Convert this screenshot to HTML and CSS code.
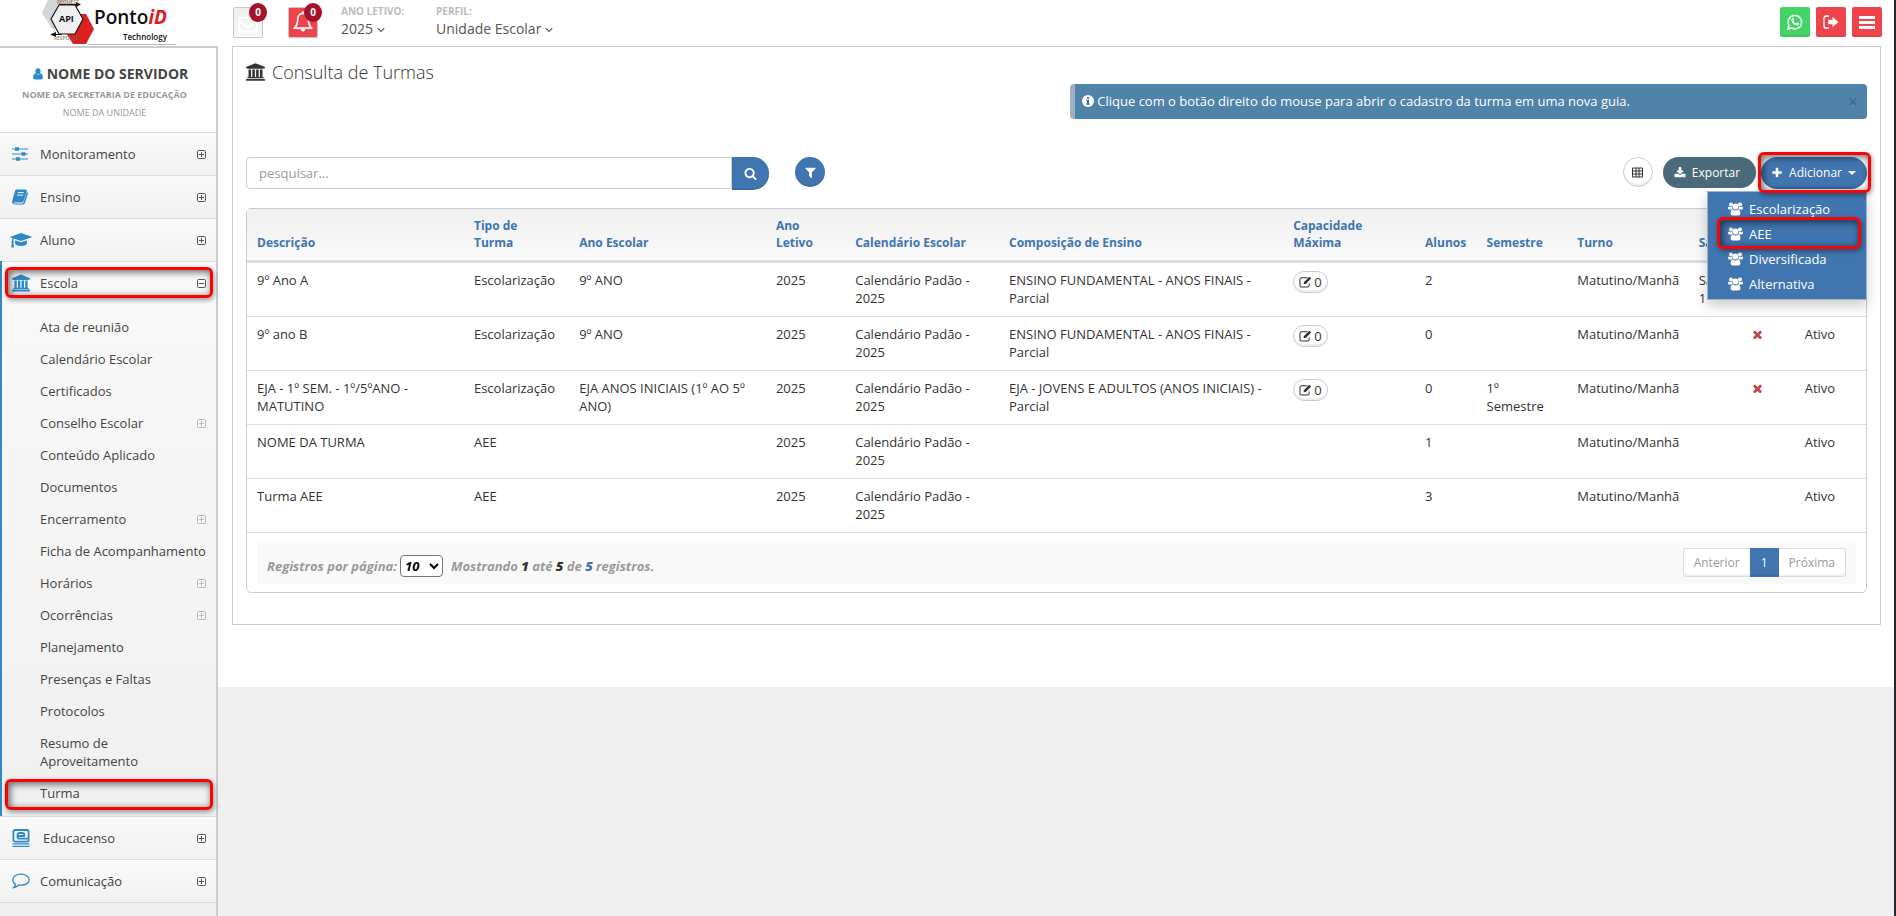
FILE: index.html
```html
<!DOCTYPE html>
<html lang="pt-BR">
<head>
<meta charset="utf-8">
<title>Consulta de Turmas</title>
<link rel="stylesheet" href="styles.css">
</head>
<body>
<svg class="sprite" aria-hidden="true">
  <symbol id="i-plus" viewBox="0 0 1792 1792"><path d="M1600 736v192q0 40-28 68t-68 28h-416v416q0 40-28 68t-68 28h-192q-40 0-68-28t-28-68v-416h-416q-40 0-68-28t-28-68v-192q0-40 28-68t68-28h416v-416q0-40 28-68t68-28h192q40 0 68 28t28 68v416h416q40 0 68 28t28 68z"/></symbol>
  <symbol id="i-search" viewBox="0 0 1792 1792"><path d="M1216 832q0-185-131.500-316.500t-316.500-131.500-316.500 131.500-131.500 316.500 131.500 316.500 316.500 131.500 316.500-131.500 131.500-316.500zm512 832q0 52-38 90t-90 38q-54 0-90-38l-343-342q-179 124-399 124-143 0-273.500-55.500t-225-150-150-225-55.500-273.500 55.500-273.500 150-225 225-150 273.500-55.500 273.500 55.500 225 150 150 225 55.500 273.500q0 220-124 399l343 343q37 37 37 90z"/></symbol>
  <symbol id="i-filter" viewBox="0 0 1792 1792"><path d="M1595 295q17 41-14 70l-493 493v742q0 42-39 59-13 5-25 5-27 0-45-19l-256-256q-19-19-19-45v-486l-493-493q-31-29-14-70 17-39 59-39h1280q42 0 59 39z"/></symbol>
  <symbol id="i-times" viewBox="0 0 1792 1792"><path d="M1490 1322q0 40-28 68l-136 136q-28 28-68 28t-68-28l-294-294-294 294q-28 28-68 28t-68-28l-136-136q-28-28-28-68t28-68l294-294-294-294q-28-28-28-68t28-68l136-136q28-28 68-28t68 28l294 294 294-294q28-28 68-28t68 28l136 136q28 28 28 68t-28 68l-294 294 294 294q28 28 28 68z"/></symbol>
  <symbol id="i-download" viewBox="0 0 1792 1792"><path d="M1344 1344q0-26-19-45t-45-19-45 19-19 45 19 45 45 19 45-19 19-45zm256 0q0-26-19-45t-45-19-45 19-19 45 19 45 45 19 45-19 19-45zm128-224v320q0 40-28 68t-68 28h-1472q-40 0-68-28t-28-68v-320q0-40 28-68t68-28h465l135 136q58 56 136 56t136-56l136-136h464q40 0 68 28t28 68zm-325-569q17 41-14 70l-448 448q-18 19-45 19t-45-19l-448-448q-31-29-14-70 17-39 59-39h256v-448q0-26 19-45t45-19h256q26 0 45 19t19 45v448h256q42 0 59 39z"/></symbol>
  <symbol id="i-school" viewBox="0 0 1920 1792"><path d="M960 0l960 384v128h-128q0 26-20.500 45t-48.500 19h-1526q-28 0-48.500-19t-20.500-45h-128v-128zm-704 640h256v768h128v-768h256v768h128v-768h256v768h128v-768h256v768h59q28 0 48.500 19t20.500 45v64h-1664v-64q0-26 20.500-45t48.500-19h59v-768zm1595 960q28 0 48.500 19t20.500 45v128h-1920v-128q0-26 20.500-45t48.500-19h1782z"/></symbol>
  <symbol id="i-user" viewBox="0 0 14 16"><ellipse cx="7" cy="4" rx="3.600" ry="4"/><path d="M3.500 7c-2.300.8-3.300 3-3.300 6 0 1.700 1 2.700 2.500 2.700h8.600c1.500 0 2.500-1 2.500-2.700 0-3-1-5.200-3.300-6-2 2.200-5 2.200-7 0z"/></symbol>
  <symbol id="i-sliders" viewBox="0 0 16 14"><path d="M0 1.500h16v1H0zM0 6.500h16v1H0zM0 11.500h16v1H0zM3 .3h4v3.400H3zM9.500 5.300h4v3.400h-4zM4 10.300h4v3.400H4z"/></symbol>
  <symbol id="i-book" viewBox="0 0 16 16"><path d="M4.500.5h9c1 0 1.500.8 1.200 1.700L11.600 12c-.3.900-1.200 1.500-2.100 1.500H2.300c-.7 0-.9.600-.5 1h8.400c.5 0 1-.3 1.200-.8L14.900 3.100c.9.300 1.200 1 .9 1.900l-2.900 9c-.3.900-1.200 1.500-2.100 1.500H2.500C.6 15.500-.4 13.600.3 11.800L3 2C3.200 1.100 3.700.5 4.500.5z"/><path class="cut" d="M5.700 3.600h6M5 6.100h6"/></symbol>
  <symbol id="i-cap" viewBox="0 0 22 16"><path d="M11 1l10.700 3.700c.3.100.3.500 0 .6L11 9 4.300 6.700C3.600 7.400 3.400 8 3.300 9c.7.500.7 1.400.1 1.900l.6 4.600H1.200l.6-4.600c-.6-.5-.6-1.400.1-1.900.1-1.100.3-2 .8-2.800L.3 5.300c-.3-.1-.3-.5 0-.6z"/><path d="M5.200 8.200L11 10.200l5.800-2 .2 3.600c-1 1.400-3.300 2.200-6 2.200s-5-.8-6-2.200z"/></symbol>
  <symbol id="i-educa" viewBox="0 0 18 18"><g fill="none" stroke="currentColor" stroke-width="1.800"><rect x="1.400" y="1" width="15.200" height="11.600" rx="1.600"/><path d="M5.500 7h6.700V5.800c0-1.300-.8-1.800-1.900-1.800H7.600C6.200 4 5.500 4.600 5.500 5.800v2c0 1.300.8 1.900 2.100 1.900h8.500"/><path d="M.5 14.800h17M.5 17.300h17" stroke-width="1.200"/></g></symbol>
  <symbol id="i-comment" viewBox="0 0 18 16"><path fill="none" stroke="currentColor" stroke-width="1.300" d="M9 1.200c4.600 0 8.200 2.400 8.200 5.500S13.600 12.200 9 12.200c-.8 0-1.500-.1-2.200-.2-1.300 1.300-3 2.200-5 2.500.9-.9 1.500-2 1.700-3.300C1.800 10.200.8 8.600.8 6.700.8 3.600 4.400 1.200 9 1.200z"/></symbol>
  <symbol id="i-expand" viewBox="0 0 9 9"><path fill="none" stroke="currentColor" d="M1.500.5h6a1 1 0 0 1 1 1v6a1 1 0 0 1-1 1h-6a1 1 0 0 1-1-1v-6a1 1 0 0 1 1-1zM2 4.500h5M4.500 2v5"/></symbol>
  <symbol id="i-collapse" viewBox="0 0 9 9"><path fill="none" stroke="currentColor" d="M1.500.5h6a1 1 0 0 1 1 1v6a1 1 0 0 1-1 1h-6a1 1 0 0 1-1-1v-6a1 1 0 0 1 1-1zM2 4.500h5"/></symbol>
  <symbol id="i-mail" viewBox="0 0 20 16"><path fill="none" stroke="currentColor" stroke-width="1.600" stroke-linejoin="round" d="M1.500 1h17v14h-17zM1.500 4.500l7 5.500c1 .7 2 .7 3 0l7-5.500"/></symbol>
  <symbol id="i-bell" viewBox="0 0 18 20"><path fill="none" stroke="currentColor" stroke-width="1.500" stroke-linejoin="round" d="M9 2.200c3 0 4.800 2.200 4.800 5 0 4.200 1 6.400 3.200 8.300H1c2.200-1.900 3.200-4.100 3.200-8.300 0-2.800 1.800-5 4.800-5z"/><path d="M8 .5h2v2H8zM6.700 16h4.600c0 1.600-1 2.600-2.300 2.600S6.700 17.600 6.700 16z"/></symbol>
  <symbol id="i-chevron" viewBox="0 0 8 6"><path fill="none" stroke="currentColor" stroke-width="1.200" d="M.7 1.200L4 4.500l3.300-3.300"/></symbol>
  <symbol id="i-whatsapp" viewBox="0 0 16 16"><path fill="none" stroke="currentColor" stroke-width="1.500" d="M1 15l1-3.700A6.700 6.700 0 1 1 4.700 14z"/><path d="M5.200 4.200c.4-.4 1-.4 1.200.1l.6 1.400c.1.300-.6.900-.6 1.200.5 1.100 1.500 2 2.700 2.500.3.100.9-.9 1.200-.8l1.500.8c.5.300-.1 1.300-.5 1.600-.8.600-1.800.5-2.800.1-1.700-.7-3-2-3.800-3.700-.5-1.100-.4-2.300.5-3.200z"/></symbol>
  <symbol id="i-exit" viewBox="0 0 16 14"><path fill="none" stroke="currentColor" stroke-width="1.400" d="M6 1H3.200A2.200 2.200 0 0 0 1 3.200v7.600A2.200 2.200 0 0 0 3.200 13H6"/><path d="M9.600 1.700L15.400 7l-5.800 5.300V9.200H5.200V4.800h4.400z"/></symbol>
  <symbol id="i-bars" viewBox="0 0 16 13"><path d="M0 0h16v3H0zM0 5h16v3H0zM0 10h16v3H0z"/></symbol>
  <symbol id="i-info" viewBox="0 0 12 12"><circle cx="6" cy="6" r="6"/><path fill="#3d78a8" d="M5 2h2v1.700H5zM4.300 4.800H7v3.700h.8v1.300H4.200V8.500H5V6h-.7z"/></symbol>
  <symbol id="i-table" viewBox="0 0 11 11"><path fill="none" stroke="currentColor" d="M.5 1h10v9H.5zM0 4h11M0 7h11M4 1v9M7 1v9"/></symbol>
  <symbol id="i-edit" viewBox="0 0 14 13"><path fill="none" stroke="currentColor" stroke-width="1.100" d="M9.200 2H2.700A1.700 1.700 0 0 0 1 3.700v6.600A1.700 1.700 0 0 0 2.700 12h6.600a1.700 1.700 0 0 0 1.700-1.700V8.200"/><path d="M11.200.8l2 2-6 6H5.100V6.700z"/></symbol>
  <symbol id="i-users" viewBox="0 0 15 14"><circle cx="3" cy="2.400" r="2"/><circle cx="12" cy="2.400" r="2"/><circle cx="7.500" cy="4.600" r="3"/><path d="M.9 4.600c.9.700 2 .7 3 .2 0 1.100.3 1.900.9 2.600H1.700C.6 7.400 0 6.900.1 5.900.1 5.300.4 4.700.9 4.600zM14.100 4.600c-.9.700-2 .7-3 .2 0 1.100-.3 1.900-.9 2.600h3.100c1.100 0 1.700-.5 1.600-1.500 0-.6-.3-1.200-.8-1.300zM4.800 7.600c1.600 1.200 3.800 1.200 5.400 0 1.500.3 2.200 1.900 2.200 4 0 1.200-.8 2-2 2H4.600c-1.200 0-2-.8-2-2 0-2.100.7-3.700 2.200-4z"/></symbol>
</svg>

<div class="app">
  <header class="topbar">
    <a class="logo" href="#" aria-label="PontoiD Technology">
      <svg class="logo-art" viewBox="0 0 134 46" aria-hidden="true">
        <path fill="#d5d6d8" d="M8-5h20l6 18-14 16H10L0 13z"/>
        <path fill="#db2020" d="M33 14h11l8 15-8 15H31L23 31z"/>
        <path fill="#f0f0f1" stroke="#161616" stroke-width="1.200" d="M17 5h16l8 14-8 15H17L9 19z"/>
        <path stroke="#161616" stroke-width="1.200" d="M17 4.500h18M12 34.500h8"/>
        <path fill="#161616" d="M34 2l5 2.500L34 7zM14 32l-6 2.500 6 2.500z"/>
        <text class="logo-tiny" x="15" y="4">REQUEST</text>
        <text class="logo-api" x="17" y="22">API</text>
        <text class="logo-tiny" x="12" y="40">RESPONSE</text>
        <path stroke="#bbb" d="M46 44.500h88"/>
      </svg>
      <span class="logo-text"><span class="logo-name">Ponto<em>iD</em></span><span class="logo-sub">Technology</span></span>
    </a>
    <div class="top-tools">
      <button class="notify mail" type="button" aria-label="Mensagens"><svg class="i-22"><use href="#i-mail"/></svg><span class="count">0</span></button>
      <button class="notify bell" type="button" aria-label="Alertas"><svg class="i-22"><use href="#i-bell"/></svg><span class="count">0</span></button>
      <div class="context"><span class="context-label">ANO LETIVO:</span><button type="button">2025 <svg class="chev"><use href="#i-chevron"/></svg></button></div>
      <div class="context"><span class="context-label">PERFIL:</span><button type="button">Unidade Escolar <svg class="chev"><use href="#i-chevron"/></svg></button></div>
      <div class="top-actions">
        <button class="sq green" type="button" aria-label="WhatsApp"><svg class="i-16"><use href="#i-whatsapp"/></svg></button>
        <button class="sq red" type="button" aria-label="Sair"><svg class="i-16"><use href="#i-exit"/></svg></button>
        <button class="sq red" type="button" aria-label="Menu"><svg class="i-bars"><use href="#i-bars"/></svg></button>
      </div>
    </div>
  </header>

  <div class="body">
    <nav class="sidebar">
      <div class="who">
        <p class="who-name"><svg class="who-icon"><use href="#i-user"/></svg>NOME DO SERVIDOR</p>
        <p class="who-org">NOME DA SECRETARIA DE EDUCAÇÃO</p>
        <p class="who-unit">NOME DA UNIDADE</p>
      </div>
      <ul class="menu">
        <li><a class="item" href="#"><svg class="ico"><use href="#i-sliders"/></svg>Monitoramento<svg class="exp"><use href="#i-expand"/></svg></a></li>
        <li><a class="item" href="#"><svg class="ico"><use href="#i-book"/></svg>Ensino<svg class="exp"><use href="#i-expand"/></svg></a></li>
        <li><a class="item" href="#"><svg class="ico wide"><use href="#i-cap"/></svg>Aluno<svg class="exp"><use href="#i-expand"/></svg></a></li>
        <li class="open"><a class="item marked" href="#"><svg class="ico big"><use href="#i-school"/></svg>Escola<svg class="exp"><use href="#i-collapse"/></svg></a>
          <ul class="submenu">
            <li><a href="#">Ata de reunião</a></li>
            <li><a href="#">Calendário Escolar</a></li>
            <li><a href="#">Certificados</a></li>
            <li><a href="#">Conselho Escolar<svg class="exp"><use href="#i-expand"/></svg></a></li>
            <li><a href="#">Conteúdo Aplicado</a></li>
            <li><a href="#">Documentos</a></li>
            <li><a href="#">Encerramento<svg class="exp"><use href="#i-expand"/></svg></a></li>
            <li><a href="#">Ficha de Acompanhamento</a></li>
            <li><a href="#">Horários<svg class="exp"><use href="#i-expand"/></svg></a></li>
            <li><a href="#">Ocorrências<svg class="exp"><use href="#i-expand"/></svg></a></li>
            <li><a href="#">Planejamento</a></li>
            <li><a href="#">Presenças e Faltas</a></li>
            <li><a href="#">Protocolos</a></li>
            <li><a href="#">Resumo de<br>Aproveitamento</a></li>
            <li><a class="marked" href="#">Turma</a></li>
          </ul>
        </li>
        <li><a class="item" href="#"><svg class="ico big educa"><use href="#i-educa"/></svg>Educacenso<svg class="exp"><use href="#i-expand"/></svg></a></li>
        <li><a class="item" href="#"><svg class="ico big"><use href="#i-comment"/></svg>Comunicação<svg class="exp"><use href="#i-expand"/></svg></a></li>
      </ul>
    </nav>

    <main class="content">
      <div class="sheet">
        <section class="panel">
          <h1><svg class="title-icon"><use href="#i-school"/></svg>Consulta de Turmas</h1>
          <div class="alert" role="alert"><svg class="i-12"><use href="#i-info"/></svg><span>Clique com o botão direito do mouse para abrir o cadastro da turma em uma nova guia.</span><button type="button" aria-label="Fechar">×</button></div>

          <div class="toolbar">
            <form class="search">
              <input type="search" placeholder="pesquisar..." aria-label="Pesquisar">
              <button type="button" aria-label="Buscar"><svg class="i-14"><use href="#i-search"/></svg></button>
            </form>
            <button class="round blue" type="button" aria-label="Filtrar"><svg class="i-14"><use href="#i-filter"/></svg></button>
            <div class="tools">
              <button class="round plain" type="button" aria-label="Colunas"><svg class="i-11"><use href="#i-table"/></svg></button>
              <button class="pill slate" type="button"><svg class="i-12"><use href="#i-download"/></svg>Exportar</button>
              <div class="add marked">
                <button class="pill blue" type="button" aria-expanded="true"><svg class="i-12"><use href="#i-plus"/></svg>Adicionar<span class="caret"></span></button>
                <ul class="dropdown">
                  <li><a href="#"><svg class="i-15"><use href="#i-users"/></svg>Escolarização</a></li>
                  <li><a class="marked" href="#"><svg class="i-15"><use href="#i-users"/></svg>AEE</a></li>
                  <li><a href="#"><svg class="i-15"><use href="#i-users"/></svg>Diversificada</a></li>
                  <li><a href="#"><svg class="i-15"><use href="#i-users"/></svg>Alternativa</a></li>
                </ul>
              </div>
            </div>
          </div>

          <div class="grid">
            <table>
              <colgroup><col class="c-desc"><col class="c-type"><col class="c-grade"><col class="c-year"><col class="c-cal"><col class="c-comp"><col class="c-cap"><col class="c-num"><col class="c-sem"><col class="c-shift"><col class="c-room"><col class="c-flag"><col class="c-status"></colgroup>
              <thead>
                <tr><th>Descrição</th><th>Tipo de Turma</th><th>Ano Escolar</th><th>Ano Letivo</th><th>Calendário Escolar</th><th>Composição de Ensino</th><th>Capacidade Máxima</th><th>Alunos</th><th>Semestre</th><th>Turno</th><th>Sala</th><th></th><th></th></tr>
              </thead>
              <tbody>
                <tr><td>9º Ano A</td><td>Escolarização</td><td>9º ANO</td><td>2025</td><td>Calendário Padão - 2025</td><td>ENSINO FUNDAMENTAL - ANOS FINAIS - Parcial</td><td class="cap"><button type="button"><svg class="i-13"><use href="#i-edit"/></svg>0</button></td><td>2</td><td></td><td>Matutino/Manhã</td><td>Sala 1</td><td></td><td></td></tr>
                <tr><td>9º ano B</td><td>Escolarização</td><td>9º ANO</td><td>2025</td><td>Calendário Padão - 2025</td><td>ENSINO FUNDAMENTAL - ANOS FINAIS - Parcial</td><td class="cap"><button type="button"><svg class="i-13"><use href="#i-edit"/></svg>0</button></td><td>0</td><td></td><td>Matutino/Manhã</td><td></td><td class="no"><svg class="i-14"><use href="#i-times"/></svg></td><td>Ativo</td></tr>
                <tr><td>EJA - 1º SEM. - 1º/5ºANO - MATUTINO</td><td>Escolarização</td><td>EJA ANOS INICIAIS (1º AO 5º ANO)</td><td>2025</td><td>Calendário Padão - 2025</td><td>EJA - JOVENS E ADULTOS (ANOS INICIAIS) - Parcial</td><td class="cap"><button type="button"><svg class="i-13"><use href="#i-edit"/></svg>0</button></td><td>0</td><td>1º Semestre</td><td>Matutino/Manhã</td><td></td><td class="no"><svg class="i-14"><use href="#i-times"/></svg></td><td>Ativo</td></tr>
                <tr><td>NOME DA TURMA</td><td>AEE</td><td></td><td>2025</td><td>Calendário Padão - 2025</td><td></td><td></td><td>1</td><td></td><td>Matutino/Manhã</td><td></td><td></td><td>Ativo</td></tr>
                <tr><td>Turma AEE</td><td>AEE</td><td></td><td>2025</td><td>Calendário Padão - 2025</td><td></td><td></td><td>3</td><td></td><td>Matutino/Manhã</td><td></td><td></td><td>Ativo</td></tr>
              </tbody>
            </table>
            <footer class="grid-foot">
              <div class="summary">
                <label for="per-page">Registros por página:</label>
                <select id="per-page"><option>10</option><option>25</option><option>50</option></select>
                <span class="showing">Mostrando <b>1</b> até <b>5</b> de <b class="total">5</b> registros.</span>
              </div>
              <div class="pager"><button type="button">Anterior</button><button class="current" type="button">1</button><button type="button">Próxima</button></div>
            </footer>
          </div>
        </section>
      </div>
    </main>
  </div>
</div>
</body>
</html>
```
FILE: styles.css
```css
* { box-sizing: border-box; }
body {
  margin: 0;
  font: 13px/18px "Open Sans", "Noto Sans", sans-serif;
  color: #333;
  background: #efefef;
}
button, input, select { font: inherit; color: inherit; margin: 0; }
button { cursor: pointer; }
a { color: inherit; text-decoration: none; }
ul { list-style: none; margin: 0; padding: 0; }
p, h1 { margin: 0; }
svg { fill: currentColor; flex: none; }
.sprite { position: absolute; width: 0; height: 0; }
.cut { fill: none; stroke: #f5f5f5; stroke-width: 1; }

.i-11 { width: 11px; height: 11px; }
.i-12 { width: 12px; height: 12px; }
.i-13 { width: 13px; height: 12px; }
.i-14 { width: 13px; height: 13px; }
.i-15 { width: 15px; height: 14px; }
.i-16 { width: 16px; height: 16px; }
.i-22 { width: 20px; height: 22px; }
.i-bars { width: 16px; height: 13px; }

.app {
  display: flex;
  flex-direction: column;
  height: 100vh;
  overflow: hidden;
  border-right: 2px solid #26282b;
}

/* Top bar */
.topbar { display: flex; flex: none; height: 46px; background: #fff; }
.logo { display: flex; width: 218px; padding-left: 42px; position: relative; overflow: hidden; }
.logo-art { width: 134px; height: 46px; }
.logo-tiny { font: 5px "Open Sans", sans-serif; fill: #8a5a3a; }
.logo-api { font: bold 9px "Open Sans", sans-serif; fill: #111; }
.logo-text { position: absolute; left: 94px; top: 4px; display: flex; flex-direction: column; color: #111; }
.logo-name { font-size: 19px; font-weight: 600; line-height: 27px; }
.logo-name em { color: #e01b22; font-weight: 700; }
.logo-sub { font-size: 8px; font-weight: 600; line-height: 12px; text-align: right; }
.top-tools { display: flex; flex: 1; align-items: flex-start; padding: 3px 12px 0 15px; }
.notify {
  position: relative;
  display: flex; align-items: flex-end; justify-content: center;
  width: 30px; height: 31px;
  margin: 4px 25px 0 0; padding: 0 0 4px;
  border: 1px solid #c8c8c8; border-radius: 2px;
  color: #fff;
}
.mail { background: linear-gradient(#eee, #f7f7f7); }
.mail svg { height: 17px; }
.bell { background: #f0444c; margin-right: 23px; }
.count {
  position: absolute; left: 15px; top: -5px;
  width: 18px; height: 19px; border-radius: 50%;
  background: #a3142a; color: #fff;
  font-size: 10px; font-weight: 700; line-height: 19px; text-align: center;
}
.context { width: 95px; display: flex; flex-direction: column; align-items: flex-start; white-space: nowrap; }
.context-label { color: #bbb; font-size: 10px; font-weight: 700; line-height: 17px; }
.context button { border: 0; padding: 0; background: none; color: #555; font-size: 14px; line-height: 18px; }
.chev { width: 8px; height: 6px; vertical-align: 1px; }
.top-actions { display: flex; gap: 6px; margin: 4px 0 0 auto; }
.sq {
  display: flex; align-items: center; justify-content: center;
  width: 30px; height: 30px; padding: 0; border: 0; border-radius: 2px; color: #fff;
  box-shadow: inset 0 -2px 0 rgba(0, 0, 0, .05);
}
.green { background: #43d366; }
.red { background: #f0444c; }

.body { display: flex; flex: 1; min-height: 0; }

/* Sidebar */
.sidebar {
  flex: none; width: 218px;
  border-top: 2px solid #ccc; border-right: 2px solid #ccc;
  background: linear-gradient(#f8f8f8, #f0f0f0);
}
.who { height: 84px; padding-top: 16px; background: #fff; text-align: center; white-space: nowrap; }
.who-name { display: flex; align-items: center; justify-content: center; gap: 4px; padding-left: 5px; color: #444; font-size: 14px; font-weight: 700; line-height: 20px; }
.who-icon { width: 10px; height: 12px; color: #2e8ac6; }
.who-org { padding-right: 7px; color: #999; font-size: 9px; font-weight: 700; line-height: 22px; }
.who-unit { padding-right: 7px; color: #999; font-size: 9px; line-height: 14px; }
.menu { color: #444; }
.item {
  position: relative;
  display: flex; align-items: center;
  height: 43px; padding: 0 10px 0 12px;
  border-top: 1px solid #ddd;
  background: linear-gradient(#fafafa, #f1f1f1);
}
.ico { width: 16px; height: 16px; margin-right: 12px; color: #2e8ac6; }
.ico.big { width: 18px; height: 18px; margin-right: 10px; }
.ico.wide { width: 22px; height: 16px; margin: 0 8px 0 -2px; }
.ico.educa { margin-right: 13px; }
.exp { width: 9px; height: 9px; margin-left: auto; color: #555; }
.open {
  border-left: 2px solid #2e8ac6;
  background: linear-gradient(#f9f9f9, #f0f0f0);
}
.open .item { padding-left: 10px; background: none; }
.menu > li:last-child { border-bottom: 1px solid #ddd; }
.submenu { padding: 7px 0; }
.submenu a { position: relative; display: flex; align-items: center; padding: 7px 10px 7px 38px; white-space: nowrap; }
.submenu .exp { color: #bbb; }

/* Red emphasis frame */
.marked::after {
  content: "";
  position: absolute; z-index: 3;
  border: 3px solid #f70505; border-radius: 6px;
  box-shadow: inset 3px 3px 7px rgba(0, 0, 0, .4), inset 0 0 6px rgba(0, 0, 0, .3), 1px 2px 5px rgba(0, 0, 0, .4);
  pointer-events: none;
}
.item.marked::after { inset: 5px 3px 6px 3px; }
.submenu .marked::after { inset: 2px 3px -1px 3px; }
.add.marked::after { inset: -5px -4px -4px -3px; }
.dropdown .marked::after { inset: -4px 5px -3px 9px; }

/* Page */
.content { flex: 1; min-width: 0; }
.sheet { padding: 0 13px 62px 14px; background: #fff; }
.panel { padding: 0 13px 31px; border: 1px solid #ccc; }
h1 { display: flex; align-items: center; gap: 7px; height: 37px; padding-top: 13px; font-size: 18px; font-weight: 300; line-height: 22px; }
.title-icon { width: 19px; height: 18px; }
.alert {
  display: flex; align-items: center; gap: 3px;
  width: 49.15%; height: 35px; margin-left: auto; padding: 0 9px 1px 7px;
  border-left: 5px solid #9db1c3; border-radius: 4px;
  background: #4f83a9; color: #fff; white-space: nowrap;
}
.alert button { margin-left: auto; padding: 0; border: 0; background: none; color: #39678b; font-size: 18px; line-height: 18px; }
.toolbar { display: flex; align-items: flex-start; margin: 38px 0 18px; }
.search { display: flex; align-items: flex-start; width: 523px; height: 33px; }
.search input {
  flex: 1; min-width: 0; height: 32px; padding: 0 12px;
  border: 1px solid #ccc; border-radius: 4px 0 0 4px; background: #fff; outline: 0;
  appearance: none;
}
.search input::placeholder { color: #999; opacity: 1; }
.search button {
  display: flex; align-items: center; justify-content: center;
  width: 37px; height: 33px; padding: 0; border: 0;
  border-radius: 0 16px 16px 0; background: #4175b0; color: #fff;
  box-shadow: inset 0 -2px 0 rgba(0, 0, 0, .08);
}
.round { display: flex; align-items: center; justify-content: center; width: 30px; height: 30px; padding: 0; border: 0; border-radius: 50%; }
.round.blue { margin-left: 26px; }
.blue { background: #4175b0; color: #fff; box-shadow: inset 0 -2px 0 rgba(0, 0, 0, .08); }
.plain { border: 1px solid #ccc; background: #fff; box-shadow: inset 0 -2px 0 #eee; margin-right: 10px; }
.tools { display: flex; align-items: flex-start; margin-left: auto; }
.pill { display: flex; align-items: center; gap: 6px; height: 31px; padding: 0 16px 0 11px; border: 0; border-radius: 16px; font-size: 12px; }
.slate { background: #4b6a79; color: #fff; margin-right: 5px; }
.add { position: relative; }
.add .pill { height: 32px; padding: 0 11px 0 10px; }
.caret { border: 4px solid transparent; border-top-color: #fff; border-bottom: 0; }
.dropdown {
  position: absolute; z-index: 2; right: 0; top: 34px;
  width: 160px; padding: 4px 0 3px;
  background: #4175b0; color: #fff;
  border: 1px solid #9fb4cc;
  box-shadow: 0 6px 12px rgba(0, 0, 0, .2);
}
.dropdown a { position: relative; display: flex; align-items: center; gap: 6px; height: 25px; padding-left: 20px; }

/* Table */
.grid { border: 1px solid #ccc; border-radius: 5px; }
table { width: 100%; table-layout: fixed; border-collapse: separate; border-spacing: 0; }
thead { background: linear-gradient(#f0f0f0, #fafafa); }
th { padding: 8px 10px 9px; border-bottom: 3px solid #ddd; color: #4175b0; font-size: 12px; font-weight: 700; line-height: 17px; text-align: left; vertical-align: bottom; }
td { padding: 8px 10px 9px; border-bottom: 1px solid #ddd; vertical-align: top; }
.c-desc { width: 13.4%; } .c-type { width: 6.5%; } .c-grade { width: 12.15%; }
.c-year { width: 4.9%; } .c-cal { width: 9.5%; } .c-comp { width: 17.55%; }
.c-cap { width: 8.15%; } .c-num { width: 3.8%; } .c-sem { width: 5.6%; }
.c-shift { width: 7.5%; } .c-room { width: 3.25%; } .c-flag { width: 3.3%; } .c-status { width: 4.4%; }
.cap button { display: flex; align-items: center; gap: 2px; height: 22px; padding: 0 5px; border: 1px solid #ccc; border-radius: 11px; background: #fff; box-shadow: inset 0 -2px 0 #eee; line-height: 18px; }
.no { color: #b94a48; }
.no svg { display: block; margin-top: 3px; }
.grid-foot { display: flex; justify-content: space-between; height: 42px; margin: 9px 10px 8px; padding: 6px 10px; background: #f9f9f9; }
.summary { display: flex; align-items: center; padding-top: 5px; color: #999; font-weight: 700; font-style: italic; }
.summary select { height: 22px; margin: 0 8px 0 3px; padding: 0; color: #000; border: 1px solid #767676; border-radius: 4px; background: #fff; font-weight: 700; font-style: italic; width: 43px; }
.summary b { color: #333; }
.summary .total { color: #4175b0; }
.pager { display: flex; height: 29px; }
.pager button { padding: 0 10px; border: 1px solid #ddd; background: #fff; color: #999; font-size: 12px; box-shadow: inset 0 -2px 0 #f2f2f2; }
.pager button:first-child { border-right: 0; border-radius: 3px 0 0 3px; }
.pager button:last-child { border-left: 0; border-radius: 0 3px 3px 0; }
.pager .current { border-color: #4175b0; background: #4175b0; color: #fff; box-shadow: inset 0 -2px 0 rgba(0, 0, 0, .08); }
```
